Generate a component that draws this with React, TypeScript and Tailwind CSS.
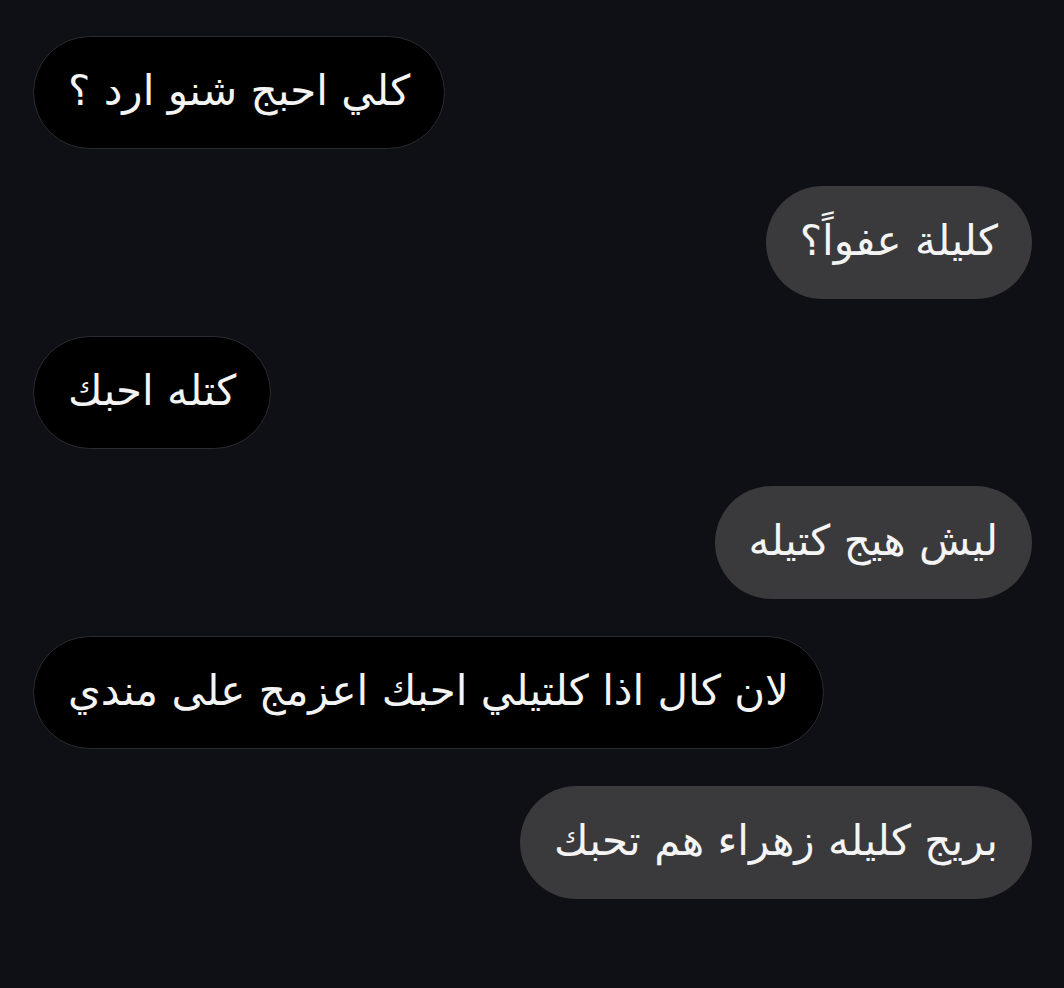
const messages = [
  { id: 1, mine: false, text: "كلي احبج شنو ارد ؟" },
  { id: 2, mine: true, text: "كليلة عفواً؟" },
  { id: 3, mine: false, text: "كتله احبك" },
  { id: 4, mine: true, text: "ليش هيج كتيله" },
  { id: 5, mine: false, text: "لان كال اذا كلتيلي احبك اعزمج على مندي" },
  { id: 6, mine: true, text: "بريج كليله زهراء هم تحبك" },
];

const App = () => {
  return (
    <div className="w-[1064px] h-[988px] bg-[#0e1016] overflow-hidden">
      <div className="flex flex-col gap-[37px] pt-[36px] pl-[33px] pr-[32px]">
        {messages.map((m) => (
          <div
            key={m.id}
            dir="rtl"
            className={
              m.mine
                ? "self-end h-[113px] flex items-center rounded-full bg-[#3a393c] px-[34px]"
                : "self-start h-[113px] flex items-center rounded-full bg-black border border-[#2b2c32] px-[34px]"
            }
          >
            <span
              className="text-[#f4f4f4] text-[42px] leading-none pb-[4px]"
              style={{ fontFamily: '"DejaVu Sans", "Noto Sans", sans-serif' }}
            >
              {m.text}
            </span>
          </div>
        ))}
      </div>
    </div>
  );
};

export default App;
